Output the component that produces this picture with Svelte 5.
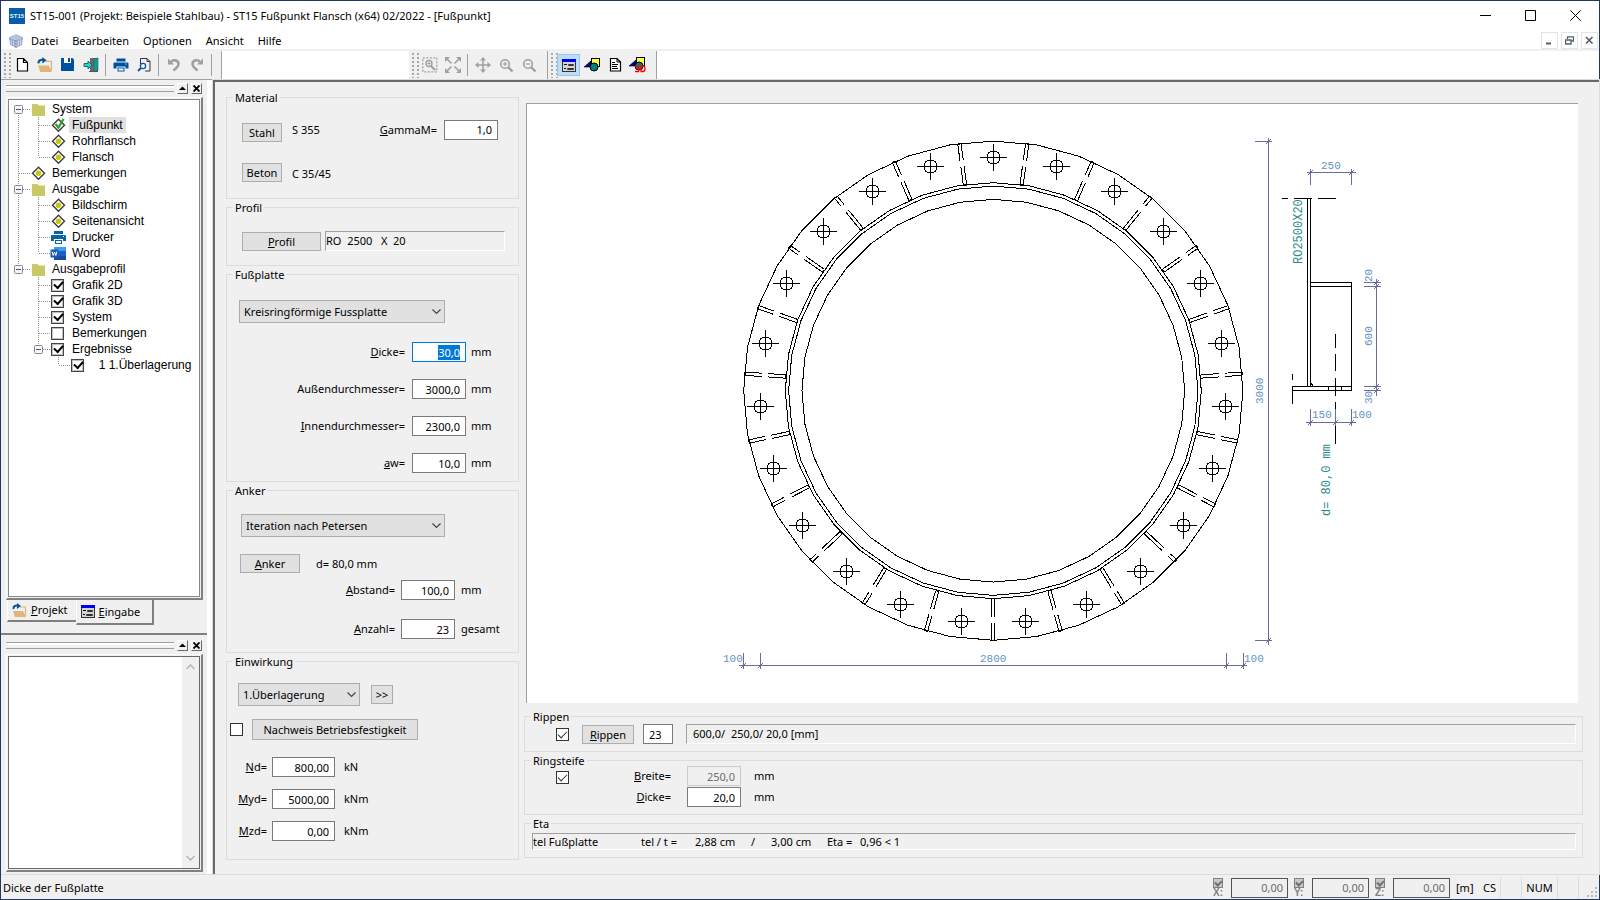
<script>
  import { onMount } from 'svelte';

  const menus = ['Datei', 'Bearbeiten', 'Optionen', 'Ansicht', 'Hilfe'];

  const tree = [
    { text: 'System', level: 0, icon: 'folder', open: true, first: true, cont: [] },
    { text: 'Fußpunkt', level: 1, icon: 'done', cont: [0], selected: true },
    { text: 'Rohrflansch', level: 1, icon: 'node', cont: [0] },
    { text: 'Flansch', level: 1, icon: 'node', cont: [0], last: true },
    { text: 'Bemerkungen', level: 0, icon: 'node', cont: [] },
    { text: 'Ausgabe', level: 0, icon: 'folder', open: true, cont: [] },
    { text: 'Bildschirm', level: 1, icon: 'node', cont: [0] },
    { text: 'Seitenansicht', level: 1, icon: 'node', cont: [0] },
    { text: 'Drucker', level: 1, icon: 'printer', cont: [0] },
    { text: 'Word', level: 1, icon: 'word', cont: [0], last: true },
    { text: 'Ausgabeprofil', level: 0, icon: 'folder', open: true, cont: [], last: true },
    { text: 'Grafik 2D', level: 1, icon: 'check', on: true, cont: [] },
    { text: 'Grafik 3D', level: 1, icon: 'check', on: true, cont: [] },
    { text: 'System', level: 1, icon: 'check', on: true, cont: [] },
    { text: 'Bemerkungen', level: 1, icon: 'check', on: false, cont: [] },
    { text: 'Ergebnisse', level: 1, icon: 'check', on: true, open: true, cont: [], last: true },
    { text: '\u00a0\u00a01 1.Überlagerung', level: 2, icon: 'check', on: true, cont: [], last: true }
  ];

  const plateRows = [
    { id: 'dicke', key: 'D', rest: 'icke=', value: '30,0', unit: 'mm' },
    { id: 'aussen', key: '', rest: 'Außendurchmesser=', value: '3000,0', unit: 'mm' },
    { id: 'innen', key: 'I', rest: 'nnendurchmesser=', value: '2300,0', unit: 'mm' },
    { id: 'aw', key: 'a', rest: 'w=', value: '10,0', unit: 'mm' }
  ];
  const anchorRows = [
    { id: 'abstand', key: 'A', rest: 'bstand=', value: '100,0', unit: 'mm' },
    { id: 'anzahl', key: 'A', rest: 'nzahl=', value: '23', unit: 'gesamt' }
  ];
  const loadRows = [
    { id: 'nd', key: 'N', rest: 'd=', value: '800,00', unit: 'kN' },
    { id: 'myd', key: 'M', rest: 'yd=', value: '5000,00', unit: 'kNm' },
    { id: 'mzd', key: 'M', rest: 'zd=', value: '0,00', unit: 'kNm' }
  ];
  const axes = ['X', 'Y', 'Z'];

  // Plan view of the base plate; radii in mm
  const cx = 993.3;
  const cy = 390.7;
  const scale = 0.1664;
  const count = 23;

  function polar(r, deg) {
    const a = (deg * Math.PI) / 180;
    return [cx + r * scale * Math.sin(a), cy - r * scale * Math.cos(a)];
  }
  function ring(r) {
    return Array.from({ length: 36 }, (_, i) => polar(r, i * 10).map((v) => v.toFixed(2)).join(',')).join(' ');
  }
  const rings = [1500, 1250, 1230, 1150].map(ring);
  const bolts = Array.from({ length: count }, (_, i) => {
    const [x, y] = polar(1400, (i * 360) / count);
    return { x: Math.floor(x) + 0.5, y: Math.floor(y) + 0.5 };
  });
  const ribs = Array.from({ length: count }, (_, i) => {
    const deg = ((i + 0.5) * 360) / count;
    const a = (deg * Math.PI) / 180;
    const major = Math.max(Math.abs(Math.sin(a)), Math.abs(Math.cos(a)));
    const dash = `${18 / major} ${6 / major}`;
    const ox = 10 * scale * Math.cos(a);
    const oy = 10 * scale * Math.sin(a);
    const [x1, y1] = polar(1250, deg);
    const [x2, y2] = polar(1500, deg);
    return { dash, x1, y1, x2, y2, ox, oy };
  });

  let first;
  onMount(() => {
    first?.focus();
    first?.select();
  });
  function track(node, id) {
    if (id === 'dicke') first = node;
  }
</script>

{#snippet printerIcon(color)}
  <g fill={color}>
    <rect x="3" y="1" width="9" height="3" />
    <path d="M1 5h13q1 0 1 1v5h-3v-2H3v2H0V6q0-1 1-1z" />
    <path d="M4 10h7v4H4z" />
  </g>
  <rect x="5" y="11" width="5" height="2" fill="#fff" />
  <rect x="12" y="6" width="1" height="1" fill="#fff" />
{/snippet}

{#snippet shapes()}
  <rect x="7.5" y="1.5" width="8" height="8" fill="#ffff50" stroke="#000" />
  <path d="M0 10l7-6v6z" fill="#000080" stroke="#000" stroke-width=".6" />
  <circle cx="10" cy="10" r="4" fill="#008080" stroke="#000" />
{/snippet}

{#snippet formIcon()}
  <rect x=".5" y=".5" width="13" height="12" fill="#d4d4d4" stroke="#333" />
  <rect x="0" y="0" width="14" height="3" fill="#0000f0" />
  <path d="M2 5.500h3M2 9.500h2" stroke="#111" />
  <path d="M6.500 5.500h5v1h-5zM5.500 9.500h6v1h-6z" fill="#fff" stroke="#333" />
{/snippet}

{#snippet folderOpen()}
  <path d="M1 8h10l3 6H3z" fill="#dfb57a" />
  <path d="M8 4h5.500v9" fill="none" stroke="#dfb57a" stroke-width="1.200" />
  <path d="M1.500 6C1 3 4 2 6 3" fill="none" stroke="#0a55a0" stroke-width="2" />
  <path d="M5 0l4 3-4 3z" fill="#0a55a0" />
{/snippet}

{#snippet magnifier(kind)}
  <circle cx="6" cy="6" r="4.300" fill="none" stroke="#a0a0a0" stroke-width="1.600" />
  <path d="M9 9l4.500 4.500" stroke="#a0a0a0" stroke-width="2.400" />
  <path d="M4 6h4" stroke="#a0a0a0" stroke-width="1.200" />
  {#if kind === '+'}<path d="M6 4v4" stroke="#a0a0a0" stroke-width="1.200" />{/if}
{/snippet}

{#snippet chevron()}
  <svg class="chev" width="9" height="6" viewBox="0 0 9 6" aria-hidden="true"><path d="M.5 .5l4 4 4-4" fill="none" stroke="#444" stroke-width="1.200" /></svg>
{/snippet}

{#snippet gripbar()}
  <div class="gripbar">
    <span class="rails"></span>
    <button class="mini" aria-label="Minimieren"><svg width="7" height="7" viewBox="0 0 7 7"><path d="M0 5l3.500-3.500L7 5z" /></svg></button>
    <button class="mini" aria-label="Schließen"><svg width="7" height="7" viewBox="0 0 7 7"><path d="M.5 .5l6 6M6.500 .5l-6 6" stroke="#000" stroke-width="1.800" /></svg></button>
  </div>
{/snippet}

{#snippet fields(rows)}
  {#each rows as r}
    <label for={r.id}><u>{r.key}</u>{r.rest}</label>
    <input id={r.id} type="text" value={r.value} use:track={r.id} />
    <span>{r.unit}</span>
  {/each}
{/snippet}

<div class="window">
  <header class="title">
    <svg width="16" height="16" viewBox="0 0 16 16"><rect width="16" height="16" fill="#0a5ca8" /><text x="8" y="10" text-anchor="middle" font-size="6" font-weight="bold" fill="#dff" font-family="Liberation Sans, sans-serif">ST15</text></svg>
    <h1>ST15-001 (Projekt: Beispiele Stahlbau) - ST15 Fußpunkt Flansch (x64) 02/2022 - [Fußpunkt]</h1>
    <div class="caption">
      <button aria-label="Minimieren"><svg width="11" height="11" viewBox="0 0 11 11"><path d="M0 5.500h11" stroke="#000" /></svg></button>
      <button aria-label="Maximieren"><svg width="11" height="11" viewBox="0 0 11 11"><path d="M.5 .5h10v10H.5z" fill="none" stroke="#000" /></svg></button>
      <button aria-label="Schließen"><svg width="11" height="11" viewBox="0 0 11 11"><path d="M.3 .3l10.400 10.400M10.700 .3L.3 10.700" stroke="#000" /></svg></button>
    </div>
  </header>

  <nav class="menu">
    <svg width="14" height="14" viewBox="0 0 14 14">
      <path d="M7 0l7 3-6 3-8-3z" fill="#b4c3dd" /><path d="M0 3l7 3v8l-6-3.500z" fill="#7f97c6" /><path d="M7 6l7-3-1 8-6 3z" fill="#93a3bd" />
      <path d="M2.300 4v7.500M4.600 5v8M9.300 5v8M11.500 4v8M0 6l7 3 7-3M1 8.500l6 3 6-3" fill="none" stroke="#dfe6f3" stroke-width=".6" />
    </svg>
    {#each menus as m}<button>{m}</button>{/each}
    <div class="mdi">
      <button aria-label="Fenster minimieren"><svg width="9" height="9" viewBox="0 0 9 9"><path d="M1 7.500h5" stroke="#55606e" stroke-width="2" /></svg></button>
      <button aria-label="Fenster wiederherstellen"><svg width="9" height="9" viewBox="0 0 9 9"><path d="M2.500 3V.8h6V5H6.500M.5 4h5.500v4H.5z" fill="none" stroke="#55606e" stroke-width="1.300" /></svg></button>
      <button aria-label="Fenster schließen"><svg width="9" height="9" viewBox="0 0 9 9"><path d="M1 1l6.500 6.500M7.500 1L1 7.500" stroke="#55606e" stroke-width="1.700" /></svg></button>
    </div>
  </nav>

  <div class="toolbars">
    <div class="bar main-bar">
      <span class="dots"></span>
      <button aria-label="Neu"><svg width="16" height="16" viewBox="0 0 16 16"><path d="M3.500 1.500h6l4 4v8.500h-10zM9.500 1.500v4h4" fill="#fff" stroke="#000" stroke-width="1.200" /></svg></button>
      <button aria-label="Öffnen"><svg width="16" height="16" viewBox="0 0 15 15">{@render folderOpen()}</svg></button>
      <button aria-label="Speichern"><svg width="16" height="16" viewBox="0 0 16 16"><path d="M1 1h11.500L14 2.500V14H1z" fill="#0050a0" /><path d="M4 1h7v5H4z" fill="#fff" /><path d="M8 1h2v4H8z" fill="#0050a0" /></svg></button>
      <button aria-label="Beenden"><svg width="16" height="16" viewBox="0 0 16 16"><path d="M7 1h8v13H7z" fill="#6a6a6a" /><path d="M11 2l4-1v12l-4 2z" fill="#1a9a94" stroke="#064" stroke-width=".6" /><path d="M1 6.500h4V4l4 4-4 4V9.500H1z" fill="#30d0d0" stroke="#066" stroke-width=".9" /><path d="M6 14.500h9" stroke="#555" /></svg></button>
      <span class="sep"></span>
      <button aria-label="Drucken"><svg width="16" height="16" viewBox="-.5 -.5 16 16">{@render printerIcon('#0050a0')}</svg></button>
      <button aria-label="Seitenansicht"><svg width="16" height="16" viewBox="0 0 16 16"><path d="M4.500 8V1.500H11l3 3V14H9M11 1.500v3h3" fill="none" stroke="#333" /><circle cx="7" cy="9" r="2.600" fill="#fff" stroke="#0a55a0" stroke-width="1.300" /><path d="M5 11l-3 3" stroke="#0a55a0" stroke-width="1.800" /></svg></button>
      <span class="sep"></span>
      <button aria-label="Rückgängig"><svg width="16" height="16" viewBox="0 0 16 16"><path d="M2 1.500V7.500h6z" fill="#a0a0a0" /><path d="M5 5C7 2 12.500 3 12.500 7c0 2.500-2 4-5 6.500" fill="none" stroke="#a0a0a0" stroke-width="2.600" /></svg></button>
      <button aria-label="Wiederholen"><svg width="16" height="16" viewBox="0 0 16 16"><path d="M14 1.500V7.500H8z" fill="#a0a0a0" /><path d="M11 5C9 2 3.500 3 3.500 7c0 2.500 2 4 5 6.500" fill="none" stroke="#a0a0a0" stroke-width="2.600" /></svg></button>
      <span class="sep"></span>
    </div>
    <div class="bar zoom-bar">
      <span class="dots"></span>
      <button aria-label="Ausschnitt"><svg width="16" height="16" viewBox="0 0 16 16"><path d="M.8 .8h14v14H.8z" fill="none" stroke="#a0a0a0" stroke-width="1.300" stroke-dasharray="2 1.500" /><circle cx="7" cy="6.500" r="3" fill="none" stroke="#a0a0a0" stroke-width="1.400" /><path d="M5.500 6.500h3M7 5v3" stroke="#a0a0a0" /><path d="M9 9l4 4" stroke="#a0a0a0" stroke-width="2" /></svg></button>
      <button aria-label="Alles zeigen"><svg width="16" height="16" viewBox="0 0 16 16"><path d="M1 1l5.500 5.500M15 1L9.500 6.500M1 15l5.500-5.500M15 15L9.500 9.500" stroke="#a0a0a0" stroke-width="1.600" /><path d="M0 0h5L0 5zM16 0h-5l5 5zM0 16h5l-5-5zM16 16h-5l5-5z" fill="#a0a0a0" /></svg></button>
      <span class="sep"></span>
      <button aria-label="Verschieben"><svg width="16" height="16" viewBox="0 0 16 16"><path d="M8 2v12M2 8h12" stroke="#a0a0a0" stroke-width="1.500" /><path d="M8 0l3 3.500H5zM8 16l3-3.500H5zM0 8l3.500-3v6zM16 8l-3.500-3v6z" fill="#a0a0a0" /></svg></button>
      <button aria-label="Vergrößern"><svg width="16" height="16" viewBox="-1 -1 16 16">{@render magnifier('+')}</svg></button>
      <button aria-label="Verkleinern"><svg width="16" height="16" viewBox="-1 -1 16 16">{@render magnifier('-')}</svg></button>
    </div>
    <div class="bar view-bar">
      <span class="dots"></span>
      <button class="active" aria-label="Eingabe"><svg width="14" height="13" viewBox="0 0 14 13">{@render formIcon()}</svg></button>
      <button aria-label="Grafik"><svg width="16" height="16" viewBox="0 0 16 16">{@render shapes()}</svg></button>
      <button aria-label="Text"><svg width="16" height="16" viewBox="0 0 16 16"><path d="M3.500 1.500h6.500l3.500 3.500v9h-10z" fill="#fff" stroke="#000" stroke-width="1.200" /><path d="M10 1.500v3.500h3.500M5 5.500h3M5 7.500h6M5 9.500h5M5 11.500h6" fill="none" stroke="#000" /></svg></button>
      <button aria-label="3D"><svg width="17" height="16" viewBox="0 0 17 16"><g transform="translate(0 -1)">{@render shapes()}</g><path d="M6 9h3.500v5.500H6M7 11.500h2.500M12 9v5.500h2q2 0 2-2.700T14 9z" fill="none" stroke="#f00" stroke-width="1.300" /></svg></button>
    </div>
  </div>

  <div class="work">
    <aside>
      <section class="dock">
        {@render gripbar()}
        <div class="treeframe">
          <ul class="tree">
            {#each tree as n}
              <li>
                <svg width={40 + 20 * n.level} height="16" aria-hidden="true">
                  <g stroke="#909090" stroke-dasharray="1 1" fill="none">
                    {#each n.cont as c}<path d="M{9.5 + 20 * c} 0v16" />{/each}
                    <path d="M{9.5 + 20 * n.level} {n.first ? 8 : 0}V{n.last ? 8 : 16}" />
                    <path d="M{10 + 20 * n.level} 8.500h11" />
                  </g>
                  {#if n.open}
                    <g transform="translate({5 + 20 * n.level} 4)"><rect x=".5" y=".5" width="8" height="8" rx="1" fill="#f6f6f6" stroke="#888" /><path d="M2 4.500h5" stroke="#3c5a9c" /></g>
                  {/if}
                  <g transform="translate({22 + 20 * n.level} 1)">
                    {#if n.icon === 'folder'}
                      <path d="M1 2h6v1h7v11H1z" fill="#c8c864" /><path d="M7 3.500h7" stroke="#e4e4a8" />
                    {:else if n.icon === 'node' || n.icon === 'done'}
                      <path d="M7.500 1.200l6 6-6 6-6-6z" fill="#fff" stroke="#3c3c3c" stroke-width="1.400" />
                      {#if n.icon === 'node'}<circle cx="7.500" cy="7.200" r="2.700" fill="#c8c800" />{:else}<path d="M4.500 6l3 3.500L12.500 1" fill="none" stroke="#2da02d" stroke-width="2.200" />{/if}
                    {:else if n.icon === 'printer'}
                      {@render printerIcon('#0a64a0')}
                    {:else if n.icon === 'word'}
                      <rect x="3" y="1" width="12" height="13" fill="#1f5fc8" /><rect x="3" y="1" width="12" height="4" fill="#37a0f0" /><rect x="3" y="10" width="12" height="4" fill="#164a9c" /><rect x="-.5" y="3.500" width="8" height="8" fill="#1858b8" /><path d="M1 5.500l1.200 4L3.500 6l1.300 3.500 1.200-4" fill="none" stroke="#fff" />
                    {/if}
                  </g>
                </svg>
                {#if n.icon === 'check'}
                  <label class="treecheck"><input type="checkbox" checked={n.on} /><span>{n.text}</span></label>
                {:else}
                  <span class:selected={n.selected}>{n.text}</span>
                {/if}
              </li>
            {/each}
          </ul>
        </div>
        <div class="tabs">
          <button><svg width="15" height="15" viewBox="0 0 15 15">{@render folderOpen()}</svg><span><u>P</u>rojekt</span></button>
          <button class="on"><svg width="14" height="13" viewBox="0 0 14 13">{@render formIcon()}</svg><span><u>E</u>ingabe</span></button>
        </div>
      </section>
      <section class="dock second">
        {@render gripbar()}
        <div class="treeframe">
          <div class="output">
            <div class="scroll">
              <svg width="9" height="6" viewBox="0 0 9 6"><path d="M.5 5l4-4 4 4" fill="none" stroke="#b4b4b4" stroke-width="1.500" /></svg>
              <svg width="9" height="6" viewBox="0 0 9 6"><path d="M.5 1l4 4 4-4" fill="none" stroke="#b4b4b4" stroke-width="1.500" /></svg>
            </div>
          </div>
        </div>
      </section>
    </aside>

    <main>
      <form class="inputs" onsubmit={(e) => e.preventDefault()}>
        <fieldset class="material">
          <legend>Material</legend>
          <div class="row">
            <button type="button">Stahl</button><span>S 355</span>
            <label class="push" for="gamma"><u>G</u>ammaM=</label>
            <input id="gamma" type="text" value="1,0" />
          </div>
          <div class="row low"><button type="button">Beton</button><span>C 35/45</span></div>
        </fieldset>

        <fieldset class="profile">
          <legend>Profil</legend>
          <div class="row"><button type="button"><u>P</u>rofil</button><output class="sunken">RO&nbsp; 2500 &nbsp; X&nbsp; 20</output></div>
        </fieldset>

        <fieldset class="plate">
          <legend>Fußplatte</legend>
          <div class="select"><select aria-label="Form der Fußplatte"><option>Kreisringförmige Fussplatte</option></select>{@render chevron()}</div>
          <div class="fields">{@render fields(plateRows)}</div>
        </fieldset>

        <fieldset class="anchor">
          <legend>Anker</legend>
          <div class="select"><select aria-label="Verfahren"><option>Iteration nach Petersen</option></select>{@render chevron()}</div>
          <div class="row"><button type="button"><u>A</u>nker</button><span>d= 80,0 mm</span></div>
          <div class="fields">{@render fields(anchorRows)}</div>
        </fieldset>

        <fieldset class="load">
          <legend>Einwirkung</legend>
          <div class="row">
            <div class="select"><select aria-label="Überlagerung"><option>1.Überlagerung</option></select>{@render chevron()}</div>
            <button type="button">&gt;&gt;</button>
          </div>
          <div class="row fatigue">
            <input type="checkbox" aria-label="Nachweis Betriebsfestigkeit" />
            <button type="button">Nachweis Betriebsfestigkeit</button>
          </div>
          <div class="fields">{@render fields(loadRows)}</div>
        </fieldset>
      </form>

      <div class="view">
        <div class="canvas">
          <svg viewBox="527 104 1051 599" role="img" aria-label="Fußplatte">
            <g class="ink" shape-rendering="crispEdges">
              {#each rings as pts}<polygon points={pts} />{/each}
              {#each ribs as r}
                <path stroke-dasharray={r.dash} d="M{r.x1 + r.ox} {r.y1 + r.oy}L{r.x2 + r.ox} {r.y2 + r.oy}" />
                <path stroke-dasharray={r.dash} d="M{r.x1 - r.ox} {r.y1 - r.oy}L{r.x2 - r.ox} {r.y2 - r.oy}" />
                <path d="M{r.x1 + r.ox} {r.y1 + r.oy}L{r.x1 - r.ox} {r.y1 - r.oy}M{r.x2 + r.ox} {r.y2 + r.oy}L{r.x2 - r.ox} {r.y2 - r.oy}" />
              {/each}
              {#each bolts as b}
                <circle cx={b.x} cy={b.y} r="6.600" />
                <path d="M{b.x - 13.5} {b.y}h27M{b.x} {b.y - 13.5}v27" />
              {/each}
              <path d="M1282 198.500h6M1294 198.500h18M1318 198.500h18M1307.500 198v188M1310.500 198v188" />
              <path d="M1310 282.500h42M1310 286.500h42M1351.500 282v109M1292.500 386.500h59v4h-59zM1328.500 386v4M1341.500 386v4" />
              <path d="M1335.500 334v14M1335.500 354v17M1335.500 378v18M1335.500 402v7M1335.500 425v19M1292.500 374v6M1292.500 386v18M1311 383l2 3" />
            </g>
            <g class="dim" shape-rendering="crispEdges">
              <path d="M1268.500 138v507M1255 141.500h17M1255 640.500h17M1266 144l5-5M1266 643l5-5" />
              <path d="M1307 172.500h49M1310.500 169v16M1351.500 169v16M1308 175l5-5M1349 175l5-5" />
              <path d="M1376.500 279v117M1364 282.500h17M1364 286.500h17M1364 386.500h17M1364 390.500h17M1374 285l5-5M1374 289l5-5M1374 389l5-5M1374 393l5-5" />
              <path d="M1306 422.500h50M1310.500 409v17M1335.500 409v17M1351.500 409v17M1308 425l5-5M1333 425l5-5M1349 425l5-5" />
              <path d="M739 665.500h508M743.500 653v16M760.500 653v16M1226.500 653v16M1243.500 653v16M741 668l5-5M758 668l5-5M1224 668l5-5M1241 668l5-5" />
            </g>
            <g class="num">
              <text x="1321" y="169">250</text>
              <text x="1312" y="418">150</text>
              <text x="1352" y="418">100</text>
              <text x="723" y="662">100</text>
              <text x="980" y="662">2800</text>
              <text x="1244" y="662">100</text>
              <text transform="translate(1263 404) rotate(-90)">3000</text>
              <text transform="translate(1372 282) rotate(-90)">20</text>
              <text transform="translate(1372 346) rotate(-90)">600</text>
              <text transform="translate(1372 404) rotate(-90)">30</text>
            </g>
            <g class="note">
              <text transform="translate(1302 264) rotate(-90)">RO2500X20</text>
              <text transform="translate(1330 516) rotate(-90)">d= 80,0 mm</text>
            </g>
          </svg>
        </div>

        <fieldset class="ribs">
          <legend>Rippen</legend>
          <div class="row">
            <input type="checkbox" checked aria-label="Rippen" />
            <button type="button"><u>R</u>ippen</button>
            <input class="short" type="text" value="23" aria-label="Anzahl Rippen" />
            <output class="sunken">600,0/&nbsp; 250,0/ 20,0 [mm]</output>
          </div>
        </fieldset>

        <fieldset class="stiff">
          <legend>Ringsteife</legend>
          <input type="checkbox" checked aria-label="Ringsteife" />
          <div class="fields">
            <label for="breite"><u>B</u>reite=</label><input id="breite" type="text" value="250,0" disabled /><span>mm</span>
            <label for="rdicke"><u>D</u>icke=</label><input id="rdicke" type="text" value="20,0" /><span>mm</span>
          </div>
        </fieldset>

        <fieldset class="eta">
          <legend>Eta</legend>
          <output class="sunken"><span>tel Fußplatte</span><span>tel / t =</span><span>2,88 cm</span><span>/</span><span>3,00 cm</span><span>Eta =</span><span>0,96 &lt; 1</span></output>
        </fieldset>
      </div>
    </main>
  </div>

  <footer>
    <span class="hint">Dicke der Fußplatte</span>
    {#each axes as a}
      <label class="axis"><input type="checkbox" checked disabled />{a}:</label>
      <input type="text" value="0,00" disabled aria-label="Koordinate {a}" />
    {/each}
    <span class="cell unit">[m]</span>
    <span class="cell cs">CS</span>
    <span class="cell blank"></span>
    <span class="cell numlock">NUM</span>
    <span class="cell blank"></span>
    <svg class="sizer" width="11" height="11" viewBox="0 0 11 11"><path d="M8 0h2v2H8zM8 4h2v2H8zM8 8h2v2H8zM4 4h2v2H4zM4 8h2v2H4zM0 8h2v2H0z" fill="#b8b8b8" /></svg>
  </footer>
</div>

<style>
  :global(body) { margin: 0; background: #fff; }
  * { box-sizing: border-box; }
  .window {
    min-height: 100vh;
    display: flex;
    flex-direction: column;
    border: 1px solid #1f3864;
    background: #fff;
    color: #000;
    font: 11px/16px 'Noto Sans', 'Open Sans', sans-serif;
  }
  button, input, select { font: inherit; color: inherit; margin: 0; border-radius: 0; }
  svg { display: block; flex: none; }
  span, label, legend, output { white-space: nowrap; }

  .title { display: flex; align-items: center; height: 29px; padding-left: 8px; gap: 5px; }
  h1 { margin: 0; font-size: 11px; font-weight: normal; flex: 1; }
  .caption { display: flex; padding-right: 1px; }
  .caption button { width: 45px; height: 29px; padding: 0; display: grid; place-items: center; border: 0; background: none; }
  .menu { display: flex; align-items: center; height: 19px; padding: 2px 0 0 8px; }
  .menu > button { border: 0; background: none; padding: 0; margin-left: 8px; margin-right: 6px; }
  .mdi { margin-left: auto; display: flex; gap: 3px; padding-right: 1px; }
  .mdi button { width: 17px; height: 17px; padding: 0; display: grid; place-items: center; border: 1px solid #e4e4e4; background: #fff; }

  .toolbars { display: flex; height: 31px; border-top: 2px solid #f0f0f0; }
  .bar { display: flex; align-items: center; height: 29px; background: #f0f0f0; border-right: 1px solid #a0a0a0; border-bottom: 1px solid #a0a0a0; padding-left: 3px; }
  .bar button { width: 23px; height: 22px; padding: 0; display: grid; place-items: center; border: 1px solid transparent; background: none; }
  .bar .active { background: #c0dcf3; border-color: #90c8f6; }
  .dots { width: 8px; height: 25px; margin-right: -2px; flex: none; background: radial-gradient(circle at 1px 1px, #a8a8a8 1px, transparent 1px) 0 0 / 5px 4px; }
  .sep { width: 1px; height: 22px; background: #a0a0a0; margin: 0 3px; }
  .main-bar { width: 221px; }
  .zoom-bar { margin-left: 187px; width: 139px; }
  .view-bar { width: 109px; }

  .work { flex: 1; display: flex; min-height: 0; }
  aside { width: 207px; flex: none; display: flex; flex-direction: column; background: #f0f0f0; border-right: 1px solid #fff; }
  .dock { flex: 1; display: flex; flex-direction: column; padding: 2px 4px 5px 5px; }
  .dock.second { flex: none; height: 241px; border-top: 2px solid #808080; padding-bottom: 2px; padding-top: 4px; margin-top: 3px; }
  .gripbar { display: flex; align-items: center; gap: 3px; height: 12px; margin-bottom: 3px; padding-right: 1px; }
  .rails { flex: 1; height: 7px; border: solid #a0a0a0; border-width: 1px 0; box-shadow: inset 0 -2px #f0f0f0, inset 0 2px #fff; }
  .mini { width: 11px; height: 11px; padding: 0; display: grid; place-items: center; border: 1px solid; border-color: #fff #696969 #696969 #fff; background: #f0f0f0; }
  .treeframe { flex: 1; display: flex; border: solid; border-width: 1px 2px 2px 1px; border-color: #fff #808080 #808080 #fff; padding: 1px; }
  .tree { flex: 1; margin: 0; padding: 1px 0 0; list-style: none; background: #fff; border: 1px solid #828790; font: 12px/16px 'Liberation Sans', sans-serif; }
  li { display: flex; height: 16px; }
  li span { padding: 0 3px; }
  .selected { background: #e0e0e0; }
  .treecheck { display: flex; margin-left: -18px; align-items: center; }
  .treecheck input { appearance: none; width: 13px; height: 13px; margin: 0 5px 0 0; border: 1px solid #444; outline: 1px solid #c0c0c0; outline-offset: -2px; background: #fff; }
  .treecheck input:checked::before { content: ''; display: block; width: 7px; height: 4px; margin: 1px 2px; border: solid #000; border-width: 0 0 2px 2px; transform: rotate(-48deg); }
  .tabs { display: flex; align-items: flex-start; height: 25px; padding-left: 1px; }
  .tabs button { display: flex; align-items: center; gap: 4px; height: 22px; padding: 0 8px 0 4px; border: 0; border-bottom: 2px solid #808080; border-left: 1px solid #fff; background: #f0f0f0; }
  .tabs .on { height: 25px; padding: 0 12px 0 4px; border-right: 2px solid #808080; }
  .output { flex: 1; display: flex; justify-content: flex-end; background: #fff; border: 1px solid #696969; }
  .scroll { width: 17px; background: #f0f0f0; display: flex; flex-direction: column; justify-content: space-between; align-items: center; padding: 7px 0; }

  main { flex: 1; min-width: 0; display: flex; gap: 5px; margin-left: 5px; padding: 10px 16px 13px 11px; background: #f0f0f0; border: solid #696969; border-width: 2px 0 0 2px; outline: 1px solid #dcdcdc; }
  .inputs { width: 293px; flex: none; display: flex; flex-direction: column; gap: 3px; }
  fieldset { --inset: 0px; margin: 0; min-width: 0; padding: 0; border: 1px solid #dcdcdc; }
  legend { height: 11px; line-height: 11px; margin-left: calc(6px - var(--inset)); padding: 0 2px; }
  .row { display: flex; align-items: center; }
  fieldset button { height: 19px; padding: 0; line-height: 17px; border: 1px solid #adadad; background: #e1e1e1; }
  fieldset input[type='text'] { width: 54px; height: 20px; padding: 0 5px; text-align: right; border: 1px solid #7a7a7a; background: #fff; outline: none; }
  fieldset input[type='text']:focus { border-color: #0078d7; }
  input::selection { background: #0078d7; color: #fff; }
  fieldset input[type='text']:disabled { background: #f0f0f0; border-color: #ccc; color: #6d6d6d; }
  fieldset input[type='checkbox'] { appearance: none; width: 13px; height: 13px; border: 1px solid #333; background: #fff; flex: none; }
  fieldset input[type='checkbox']:checked::before { content: ''; display: block; width: 8px; height: 4px; margin: 2px 1px; border: solid #333; border-width: 0 0 1px 1px; transform: rotate(-45deg); }
  .sunken { border: 1px solid; border-color: #a0a0a0 #fff #fff #a0a0a0; height: 20px; line-height: 17px; }
  .select { position: relative; display: block; }
  .select select { appearance: none; display: block; width: 100%; height: 23px; padding: 0 4px; border: 1px solid #adadad; background: #e1e1e1; }
  .chev { position: absolute; right: 4px; top: 9px; pointer-events: none; }
  .fields { display: grid; align-items: center; grid-auto-rows: 20px; justify-items: start; }
  .fields label { justify-self: end; }

  .material { --inset: 15px; padding: 17px 20px 16px 15px; display: flex; flex-direction: column; gap: 18px; }
  .material .row { height: 22px; align-items: flex-start; line-height: 20px; }
  .material .low { align-items: flex-end; line-height: 16px; }
  .material button { width: 40px; margin-right: 10px; align-self: flex-end; }
  .push { margin-left: auto; margin-right: 7px; }
  .profile { --inset: 15px; padding: 18px 13px 14px 15px; }
  .profile button { width: 79px; margin-right: 4px; }
  .profile .sunken { flex: 1; }
  .plate { padding: 20px 0 8px; }
  .plate .select { margin-left: 12px; width: 206px; }
  .plate .fields { margin-top: 19px; row-gap: 17px; grid-template-columns: 180px 54px 1fr; column-gap: 5px; }
  .plate .fields :global(label) { margin-right: 2px; }
  .anchor { padding: 18px 0 13px; }
  .anchor .select { margin-left: 14px; width: 204px; }
  .anchor .row { margin: 17px 0 7px 13px; }
  .anchor button { width: 60px; margin-right: 16px; }
  .anchor .fields { row-gap: 19px; grid-template-columns: 168px 54px 1fr; column-gap: 6px; }
  .load { padding: 16px 0 18px; }
  .load .select { margin-left: 11px; width: 122px; }
  .load .row button { width: 22px; margin-left: 11px; }
  .load .fatigue { margin: 13px 0 17px 3px; }
  .load .fatigue button { width: 166px; height: 21px; margin-left: 9px; }
  .load .fields { row-gap: 12px; grid-template-columns: 40px 63px 1fr; column-gap: 5px; }
  .load .fields input { width: 63px; }
  .load .fields span { margin-left: 4px; }

  .view { flex: 1; min-width: 0; display: flex; flex-direction: column; gap: 3px; padding: 11px 0 3px; }
  .canvas { flex: 1; min-height: 400px; display: flex; margin: 0 5px 5px 2px; background: #fff; border: solid #a0a0a0; border-width: 1px 0 0 1px; }
  .canvas svg { width: 100%; height: 100%; }
  .ink { fill: none; stroke: #000; }
  .dim { fill: none; stroke: #6a6a9c; }
  .num { fill: #6494c0; font: 11px 'Liberation Mono', monospace; }
  .note { fill: #2a8c8c; font: 12px 'Liberation Mono', monospace; }
  .ribs { --inset: 31px; padding: 2px 6px 7px 31px; }
  .ribs button { width: 52px; margin: 0 9px 0 13px; }
  .ribs input.short { width: 30px; text-align: left; }
  .ribs .sunken { flex: 1; margin-left: 13px; padding-left: 6px; }
  .stiff { --inset: 31px; padding: 0 0 7px 31px; display: flex; align-items: flex-start; }
  .stiff > input { margin-top: 5px; }
  .stiff .fields { grid-template-columns: 105px 54px 1fr; column-gap: 13px; row-gap: 1px; }
  .stiff .fields label { margin-right: 3px; }
  .eta { --inset: 7px; padding: 4px 6px 7px 7px; }
  .eta .sunken { height: 17px; line-height: 15px; display: grid; grid-template-columns: 108px 54px 56px 20px 56px 33px 1fr; }

  footer { display: flex; align-items: center; height: 25px; background: #f0f0f0; border-top: 1px solid #dcdcdc; padding: 1px 0 0 2px; }
  .hint { flex: 1; }
  footer > input { width: 57px; height: 20px; padding: 0 4px; text-align: right; border: 1px solid #555; background: #f0f0f0; color: #6d6d6d; margin-right: 6px; }
  .axis { display: flex; flex-direction: column; width: 18px; color: #808080; font: bold 10px/9px 'Liberation Sans', sans-serif; }
  .axis input { appearance: none; width: 10px; height: 10px; background: #c8c8c8; border: 1px solid #808080; }
  .axis input::before { content: ''; display: block; width: 5px; height: 3px; margin: 1px; border: solid #707070; border-width: 0 0 2px 2px; transform: rotate(-45deg); }
  .cell { height: 21px; line-height: 21px; border-right: 1px solid #dcdcdc; }
  .unit { width: 27px; border: 0; }
  .cs { width: 18px; }
  .blank { width: 21px; }
  .numlock { width: 36px; text-align: center; }
  .sizer { margin: 9px 1px 0 8px; }
</style>
